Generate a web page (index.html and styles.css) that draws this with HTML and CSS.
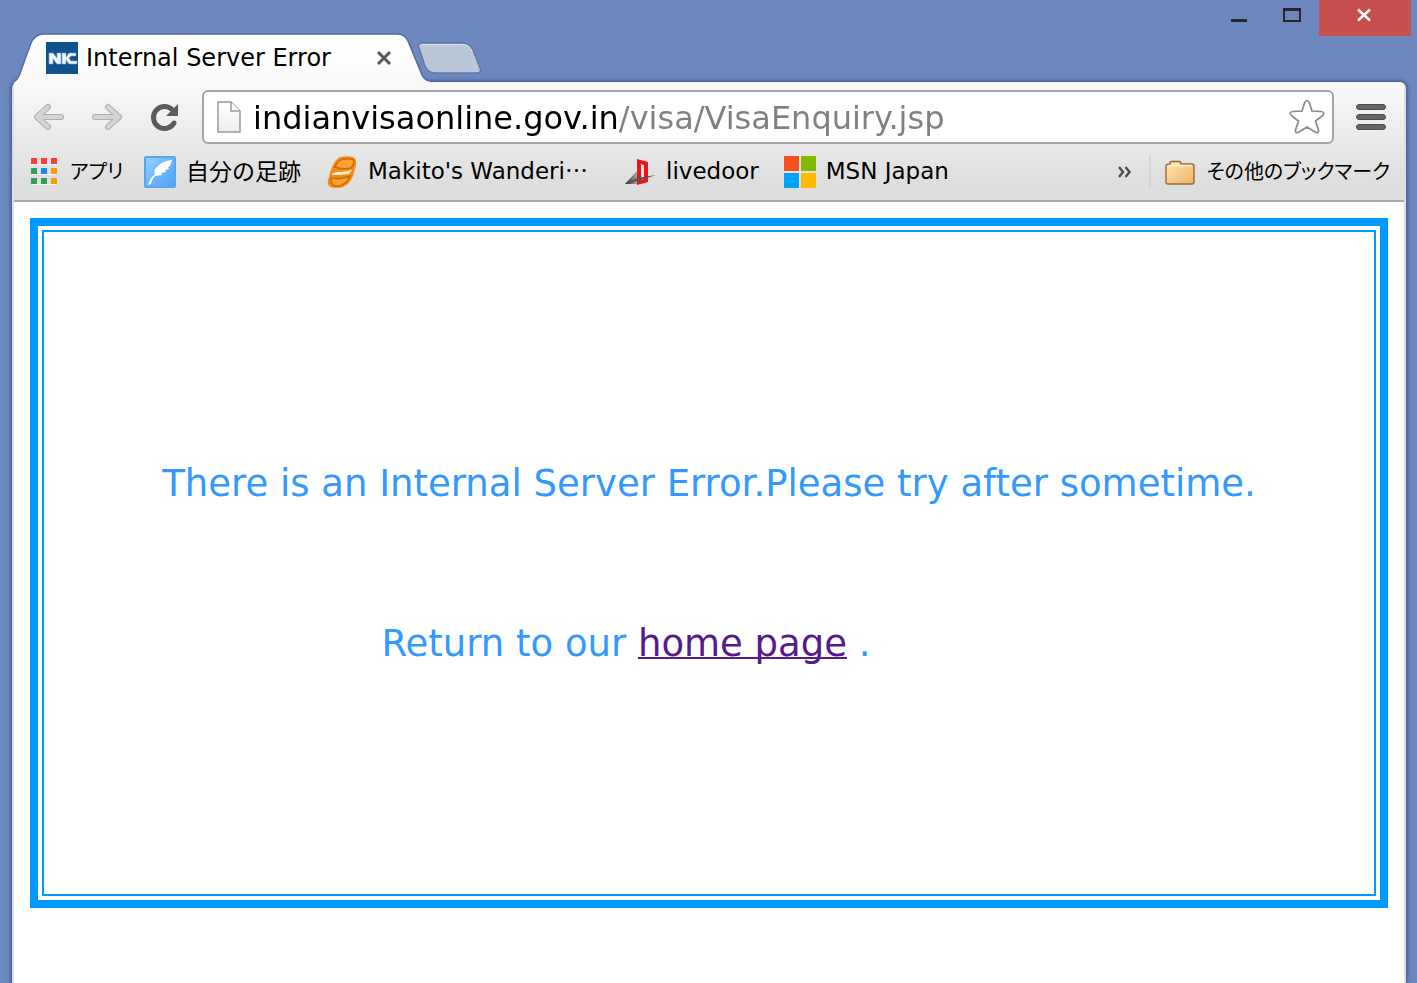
FILE: index.html
```html
<!DOCTYPE html>
<html lang="en">
<head>
<meta charset="utf-8">
<title>Internal Server Error</title>
<link rel="stylesheet" href="styles.css">
</head>
<body>
<header class="titlebar">
  <div class="tabs">
    <div class="tab">
      <svg class="tab-shape" width="416" height="51" viewBox="0 0 416 51" aria-hidden="true">
        <defs><linearGradient id="tabfill" x1="0" y1="0" x2="0" y2="1"><stop offset="0" stop-color="#fff"/><stop offset=".5" stop-color="#fefefe"/><stop offset="1" stop-color="#f8f8f8"/></linearGradient></defs>
        <path d="M0 51V49Q3 47 5 43L17 10Q21 1 30 1H384Q391 1 394 8L408 42Q411 48 416 48V51Z" fill="url(#tabfill)"/>
        <path d="M0 49Q3 47 5 43L17 10Q21 1 30 1H384Q391 1 394 8L408 42Q411 48 416 48" fill="none" stroke="#566a9f" stroke-width="1.500"/>
      </svg>
      <svg class="icon32" viewBox="0 0 32 32" aria-hidden="true"><path fill="#10528f" d="M0 0h32v32H0z"/><path d="M3 22V11h4l4 5v-5h4v11h-4l-4-5v5zm13 0V11h4v4l3-4h7v3h-5l-2 2 2 3h6v3h-8l-3-4v4z" fill="#eef6ff" stroke="#7ea6cf" stroke-width=".6"/></svg>
      <span class="tab-title">Internal Server Error</span>
      <button class="plain" aria-label="Close tab"><svg width="16" height="16" viewBox="0 0 16 16"><path d="M2 2l12 12M14 2L2 14" stroke="#555" stroke-width="3"/></svg></button>
    </div>
    <button class="plain new-tab" aria-label="New tab"><svg width="66" height="34" viewBox="0 0 66 34"><path d="M6 2H46Q54 2 57 9L64 27Q66 32 61 32H20Q12 32 9 25L3 7Q1 2 6 2Z" fill="#b9c7d9" stroke="#6478a8" stroke-width="1.500"/><path d="M6 3.500H46Q53 3.500 56 10" fill="none" stroke="#d5dfea"/></svg></button>
  </div>
  <div class="controls">
    <button class="plain minimize" aria-label="Minimize"><svg width="16" height="24" viewBox="0 0 16 24"><path d="M0 19h16v3H0z" fill="#272727"/></svg></button>
    <button class="plain maximize" aria-label="Maximize"><svg width="18" height="24" viewBox="0 0 18 24"><path fill-rule="evenodd" d="M0 8h18v14H0zM2 11v9h14v-9z" fill="#272727"/></svg></button>
    <button class="plain close" aria-label="Close"><svg width="16" height="14" viewBox="0 0 16 14"><path d="M1 1.500l12 11M13 1.500l-12 11" stroke="#fff" stroke-width="2.400"/></svg></button>
  </div>
</header>
<main class="window">
  <div class="chrome">
    <div class="toolbar">
      <button class="plain" aria-label="Back"><svg width="34" height="30" viewBox="0 0 34 30"><path d="M16 5L5 15l11 10M6 15h23" fill="none" stroke="#afafaf" stroke-width="6" stroke-linecap="round" stroke-linejoin="round"/><path d="M16 5L5 15l11 10M6 15h23" fill="none" stroke="#d4d4d4" stroke-width="4" stroke-linecap="round" stroke-linejoin="round"/></svg></button>
      <button class="plain" aria-label="Forward"><svg width="34" height="30" viewBox="0 0 34 30"><path d="M18 5l11 10-11 10M28 15H5" fill="none" stroke="#afafaf" stroke-width="6" stroke-linecap="round" stroke-linejoin="round"/><path d="M18 5l11 10-11 10M28 15H5" fill="none" stroke="#d4d4d4" stroke-width="4" stroke-linecap="round" stroke-linejoin="round"/></svg></button>
      <button class="plain" aria-label="Reload"><svg width="30" height="30" viewBox="0 0 30 30"><path d="M24 7.500A11 11 0 1 0 26 21" fill="none" stroke="#5c5c5c" stroke-width="5" stroke-linecap="round"/><path d="M30 2v12H18z" fill="#5c5c5c"/></svg></button>
      <div class="omnibox">
        <svg width="24" height="32" viewBox="0 0 24 32" aria-hidden="true"><defs><linearGradient id="pg" x1="0" y1="0" x2="0" y2="1"><stop stop-color="#fff"/><stop offset="1" stop-color="#eee"/></linearGradient></defs><path d="M1 1H14L23 10V31H1Z" fill="url(#pg)" stroke="#999" stroke-width="1.500"/><path d="M14 1V10H23" fill="#fff" stroke="#999" stroke-width="1.500"/></svg>
        <input class="address" type="text" aria-label="Address" spellcheck="false" value="indianvisaonline.gov.in/visa/VisaEnquiry.jsp">
        <button class="plain" aria-label="Bookmark this page"><svg width="36" height="36" viewBox="0 0 36 36"><path d="M15.500 4Q18 -1 20.500 4L23 12L32 12.500Q37 13 33 17L26.500 22L29.500 31Q30 35 26 33L18 28L10 33Q6 35 6.500 31L9.500 22L3 17Q-1 13 4 12.500L13 12Z" fill="#fff" stroke="#8a8a8a" stroke-width="1.700"/></svg></button>
      </div>
      <button class="plain menu" aria-label="Menu"><svg width="30" height="28" viewBox="0 0 30 28"><g fill="#666" stroke="#4d4d4d"><rect x=".5" y="1.500" width="29" height="5" rx="2.500"/><rect x=".5" y="11.500" width="29" height="5" rx="2.500"/><rect x=".5" y="21.500" width="29" height="5" rx="2.500"/></g></svg></button>
    </div>
    <nav class="bookmarks" aria-label="Bookmarks">
      <a class="bookmark apps" href="#"><svg class="icon32" viewBox="0 0 32 32" aria-hidden="true"><path fill="#fff" opacity=".7" d="M3 8h26v1H3zm0 10h26v1H3zm0 10h26v1H3z"/><path fill="#f93e3a" d="M3 2h6v6H3zm10 0h6v6h-6zm10 0h6v6h-6z"/><path fill="#2fa05c" d="M3 12h6v6H3zm0 10h6v6H3zm10 0h6v6h-6z"/><path fill="#1e88f7" d="M13 12h6v6h-6z"/><path fill="#f2a200" d="M23 12h6v6h-6zm0 10h6v6h-6z"/></svg><span class="kana" lang="ja">アプリ</span></a>
      <a class="bookmark" href="#"><svg class="icon32" viewBox="0 0 32 32" aria-hidden="true"><defs><linearGradient id="sky" x1="0" y1="0" x2="1" y2="1"><stop stop-color="#9ed4ff"/><stop offset=".45" stop-color="#70b9fc"/><stop offset="1" stop-color="#4ea1f4"/></linearGradient></defs><rect x="1" y="1" width="30" height="30" rx="1" fill="url(#sky)" stroke="#54a6f5" stroke-width="2"/><path d="M4 29Q6 22 11 18Q9 14 13 11Q18 5 28 4L26 10L24 11L25 13L21 14L22 16L17 17L18 19L11 20Q8 23 7 28Z" fill="#fff"/></svg><span class="kanji" lang="ja">自分の足跡</span></a>
      <a class="bookmark makito" href="#"><svg class="icon32" viewBox="0 0 32 32" aria-hidden="true"><path d="M12 2Q18-1 27 1Q31 3 30 9Q29 14 27 20Q24 28 17 31Q10 33 4 31Q0 28 3 21Q5 9 12 2Z" fill="#f48d18"/><path d="M9 11Q12 3 19 3Q27 2 28 5Q28 9 25 12Q17 14 9 11ZM5 22Q14 24 24 20Q20 29 13 30Q4 31 5 22Z" fill="#ffa036" stroke="#cf6c05" stroke-width="1.600"/><path d="M6 18Q10 15 16 16L26 14L23 18Q14 19 6 19Z" fill="#fff4d6"/></svg><span>Makito's Wanderi<span class="more" lang="ja">…</span></span></a>
      <a class="bookmark" href="#"><svg class="icon32" viewBox="0 0 32 32" aria-hidden="true"><defs><linearGradient id="shade"><stop stop-color="#222"/><stop offset="1" stop-color="#aaa"/></linearGradient></defs><path d="M1 28L13 15V28Z" fill="url(#shade)"/><path fill-rule="evenodd" d="M13 3L24 6V26L13 29ZM17 8V24L20 23V9Z" fill="#ed1219"/><path d="M1 28L13 22L32 19L14 25Z" fill="#555"/></svg><span>livedoor</span></a>
      <a class="bookmark" href="#"><svg class="icon32" viewBox="0 0 32 32" aria-hidden="true"><path fill="#f65020" d="M0 0h15v15H0z"/><path fill="#81bb00" d="M17 0h15v15H17z"/><path fill="#00a3f4" d="M0 17h15v15H0z"/><path fill="#ffb900" d="M17 17h15v15H17z"/></svg><span>MSN Japan</span></a>
      <button class="plain overflow" aria-label="More bookmarks"><svg width="14" height="12" viewBox="0 0 14 12"><path d="M1 1l4 5-4 5M7.500 1l4 5-4 5" fill="none" stroke="#505050" stroke-width="2.500"/></svg></button>
      <a class="bookmark others" href="#"><svg class="icon32" viewBox="0 0 32 32" aria-hidden="true"><defs><linearGradient id="fold" x1="0" y1="0" x2="1" y2="1"><stop stop-color="#ffe9b5"/><stop offset="1" stop-color="#edb265"/></linearGradient></defs><path d="M5 9V7Q5 5.500 7 5.500H14Q16 5.500 16 8H27Q29 8 29 10V26Q29 28 27 28H3Q1 28 1 26V10Q1 8 5 8" fill="url(#fold)" stroke="#936b3d" stroke-width="1.400"/><path d="M3 9.500H27" stroke="#fff3cc" stroke-width="1.500"/></svg><span class="kana" lang="ja">その他のブックマーク</span></a>
    </nav>
  </div>
  <div class="page">
    <section class="error-frame">
      <div class="error">
        <p>There is an Internal Server Error.Please try after sometime.</p>
        <p class="return">Return to our <a class="home" href="#">home page</a> .</p>
      </div>
    </section>
  </div>
</main>
</body>
</html>
```
FILE: styles.css
```css
* { box-sizing: border-box; }
body {
  margin: 0;
  min-height: 100vh;
  display: flex;
  flex-direction: column;
  background: #6d87bf;
  color: #000;
  font-family: "DejaVu Sans", "Noto Sans CJK JP", sans-serif;
  font-size: 24px;
}
svg { display: block; flex: none; }
.plain { border: 0; padding: 0; background: none; font: inherit; }
.icon32 { width: 32px; height: 32px; }

.titlebar { display: flex; justify-content: space-between; height: 82px; padding: 0 6px 0 14px; }
.tabs { display: flex; align-items: flex-end; }
.tab { position: relative; z-index: 1; display: flex; align-items: center; width: 402px; height: 48px; padding: 0 24px 0 32px; white-space: nowrap; }
.tab > * { position: relative; }
.tab .tab-shape { position: absolute; left: 0; top: -1px; }
.tab-title { flex: 1; padding-left: 8px; line-height: 30px; }
.new-tab { margin: 0 0 7px; }
.controls { display: flex; align-items: flex-start; }
.controls button { height: 36px; display: flex; justify-content: center; }
.controls .minimize, .controls .maximize { width: 53px; padding-right: 2px; }
.controls .close { width: 92px; padding-top: 8px; background: #c75050; }

.window {
  flex: 1;
  display: flex;
  flex-direction: column;
  margin: 0 11px 0 12px;
  border: solid #dedede;
  border-width: 0 2px;
  border-radius: 6px 6px 0 0;
  background: #fff;
  box-shadow: 0 0 0 1px #50659a, 0 0 4px 1px #3f5285;
}
.chrome { border-bottom: 2px solid #a9a9a9; border-radius: 6px 6px 0 0; background: linear-gradient(#fafafa, #dedede 85%); }
.toolbar { display: flex; align-items: center; padding: 8px 18px 0; gap: 24px; }
.omnibox { flex: 1; display: flex; align-items: center; min-width: 0; height: 54px; padding: 0 7px 0 13px; border: 2px solid #a4a4a4; border-radius: 6px; background: #fff; }
.menu { margin-left: -2px; }
.address {
  flex: 1;
  min-width: 0;
  height: 48px;
  padding: 2px 0 0;
  margin-left: 12px;
  border: 0;
  outline: 0;
  font: 32px "DejaVu Sans", sans-serif;
  color: #808080;
  background: linear-gradient(90deg, #000 366px, #808080 366px);
  background-clip: text;
  -webkit-text-fill-color: transparent;
}
.bookmarks { display: flex; align-items: center; gap: 25px; height: 56px; padding: 0 14px; font-size: 23px; line-height: 32px; white-space: nowrap; }
.bookmark { display: flex; align-items: center; gap: 10px; color: #000; text-decoration: none; }
.bookmark > span { padding-bottom: 2px; }
.apps { width: 91px; }
.makito { width: 273px; }
.kana { font-family: "Noto Sans CJK JP", sans-serif; font-size: 20px; font-feature-settings: "palt"; }
.bookmark > .kanji { padding-bottom: 4px; font-family: "Noto Sans CJK JP", sans-serif; }
.more { font-family: "Noto Sans CJK JP", sans-serif; line-height: 1; }
.overflow { margin-left: auto; }
.others { padding-left: 14px; border-left: 2px solid #ced7e1; margin-left: -8px; }

.page { padding: 16px; }
.error-frame { padding: 4px; border: 8px solid #09f; }
.error { min-height: 666px; border: 2px solid #09f; padding: 224px 0 0; }
.error p { margin: 0 0 104px; text-align: center; color: #39f; font-size: 37px; line-height: 56px; }
.error .return { padding-right: 166px; }
.home { color: #551a8b; text-decoration-thickness: 2px; text-decoration-skip-ink: none; }
```
